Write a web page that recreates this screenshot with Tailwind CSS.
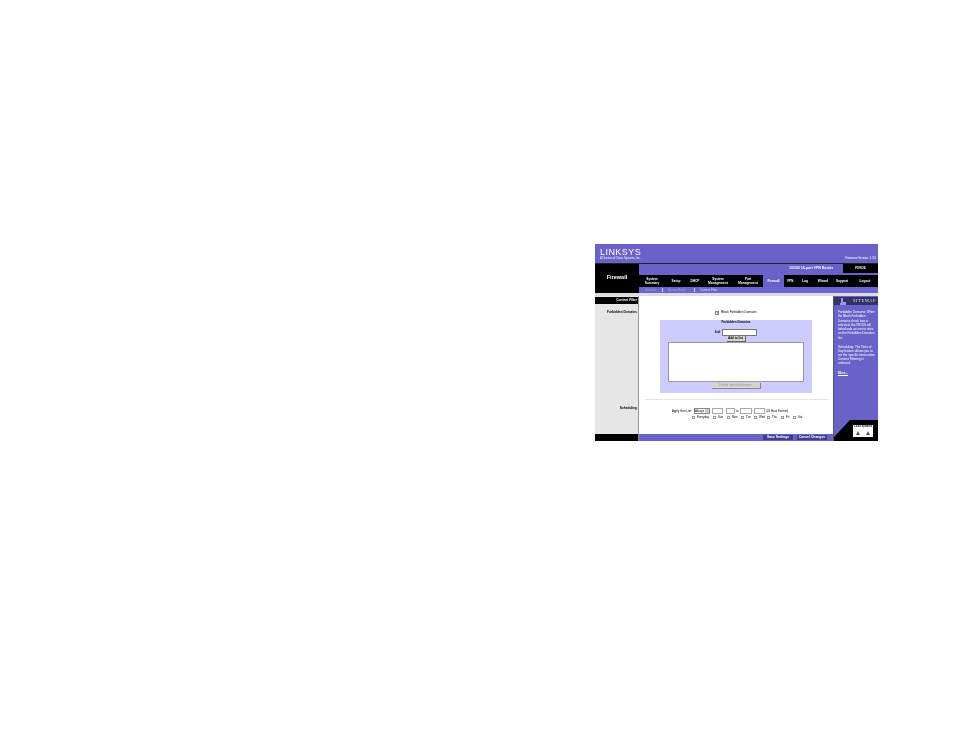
<!DOCTYPE html>
<html lang="en">
<head>
    <meta charset="UTF-8">
    <title>Firewall - Content Filter</title>
    <script src="https://cdn.jsdelivr.net/npm/@tailwindcss/browser@4"></script>
</head>
<body class="bg-white font-['Liberation_Sans',sans-serif] text-black">
    <div class="w-[954px] h-[738px] pt-[244px] pl-[595px]">
        <div class="w-[283px] h-[197px] flex flex-col blur-[0.45px]">

            <!-- top band -->
            <div class="h-[19px] bg-[#6a62c8] flex justify-between">
                <div class="pl-[5px] pt-[4px] text-white">
                    <div class="text-[9px] leading-[8px] tracking-[0.45px]">LINKSYS</div>
                    <div class="text-[2.8px] leading-[5px]">A Division of Cisco Systems, Inc.</div>
                </div>
                <div class="text-[2.9px] text-white pt-[12px] pr-[2px] leading-[4px]">Firmware Version: 1.3.6</div>
            </div>
            <div class="h-[1px] bg-[#222]"></div>

            <!-- header -->
            <div class="h-[29px] flex">
                <div class="w-[44px] bg-black text-white text-[5.5px] font-bold flex items-center justify-center pb-[3px]">Firewall</div>
                <div class="flex-1 flex flex-col">
                    <div class="h-[11px] flex items-start bg-[#6a62c8] text-white text-[3.5px] font-bold">
                        <div class="flex-1 h-[9px] flex items-center justify-end pr-[10px]">10/100 16-port VPN Router</div>
                        <div class="w-[35px] h-[9px] bg-black flex items-center justify-center">RV016</div>
                    </div>
                    <div class="h-[12px] flex bg-black text-white text-[3.2px] leading-[4px] font-bold text-center">
                        <div class="w-[26px] flex items-center justify-center">System<br>Summary</div>
                        <div class="w-[22px] flex items-center justify-center">Setup</div>
                        <div class="w-[16px] flex items-center justify-center">DHCP</div>
                        <div class="w-[30px] flex items-center justify-center">System<br>Management</div>
                        <div class="w-[30px] flex items-center justify-center">Port<br>Management</div>
                        <div class="w-[21px] bg-[#6a62c8] flex items-center justify-center">Firewall</div>
                        <div class="w-[12px] flex items-center justify-center">VPN</div>
                        <div class="w-[18px] flex items-center justify-center">Log</div>
                        <div class="w-[18px] flex items-center justify-center">Wizard</div>
                        <div class="w-[20px] flex items-center justify-center">Support</div>
                        <div class="flex-1 flex items-center justify-center">Logout</div>
                    </div>
                    <div class="h-[6px] bg-[#6a66d0] flex items-center text-[#a9a9ee] text-[2.9px] pl-[6px]">
                        <span class="w-[17px]">General</span>
                        <span class="w-[1px] h-[4px] bg-[#ddddff] mr-[5px]"></span>
                        <span class="w-[26px]">Access Rules</span>
                        <span class="w-[1px] h-[4px] bg-[#ddddff] mr-[5px]"></span>
                        <span class="text-[#ddddff]">Content Filter</span>
                    </div>
                </div>
            </div>
            <div class="h-[3px] bg-[#dddddd]"></div>

            <!-- body -->
            <div class="flex-1 flex min-h-0">
                <div class="w-[43px] pt-[1px] bg-[#e6e6e6] flex flex-col text-[3.2px] font-bold text-right">
                    <div class="h-[7px] bg-black text-white flex items-center justify-end pr-[1px]">Content Filter</div>
                    <div class="pt-[6px] pr-[1px] leading-[4px]">Forbidden Domains</div>
                    <div class="pt-[92px] pr-[1px] leading-[4px]">Scheduling</div>
                    <div class="mt-auto h-[7px] bg-black"></div>
                </div>
                <div class="w-[1px] bg-[#999999]"></div>

                <div class="w-[194px] flex flex-col">
                    <div class="flex-1 flex flex-col items-center text-[3.1px]">
                        <div class="flex items-center gap-[2px] mt-[14px] h-[5px]">
                            <span class="w-[4px] h-[4px] border border-[#888] text-[3.5px] leading-[2px] text-center">✓</span>
                            <span>Block Forbidden Domains</span>
                        </div>
                        <div class="w-[152px] h-[73px] mt-[5px] bg-[#ccccff] flex flex-col items-center">
                            <div class="h-[5px] font-bold leading-[5px]">Forbidden Domains</div>
                            <div class="flex items-center gap-[1px] mt-[4px] h-[7px]">
                                <span>Add:</span>
                                <span class="w-[35px] h-[7px] bg-white border border-[#777]"></span>
                            </div>
                            <div class="w-[19px] h-[6px] bg-[#d6d3ce] border-b border-r border-[#666] text-center leading-[5px] font-bold">Add to list</div>
                            <div class="w-[136px] h-[40px] bg-white border border-[#999]"></div>
                            <div class="w-[49px] h-[6px] mt-[1px] bg-[#d6d3ce] border-b border-r border-[#888] text-center leading-[5px] text-[#999]">Delete selected domain</div>
                        </div>
                        <div class="w-[183px] h-[1px] mt-[6px] bg-[#e4e4e4]"></div>
                        <div class="self-start ml-[33px] flex items-center mt-[8px] h-[6px] text-[2.9px]">
                            <span class="w-[22px]">Apply their List:</span>
                            <span class="w-[16px] h-[6px] border border-[#888] leading-[4px] relative">Always<span class="absolute right-0 top-0 w-[4px] h-[4px] bg-[#ccc]"></span></span>
                            <span class="w-[11px] h-[6px] ml-[2px] border border-[#aaa]"></span>
                            <span class="w-[3px] text-center">:</span>
                            <span class="w-[9px] h-[6px] border border-[#aaa]"></span>
                            <span class="w-[5px] text-center">to</span>
                            <span class="w-[12px] h-[6px] border border-[#aaa]"></span>
                            <span class="w-[2px] text-center">:</span>
                            <span class="w-[11px] h-[6px] border border-[#aaa]"></span>
                            <span class="ml-[1px]">(24 Hour Format)</span>
                        </div>
                        <div class="self-start ml-[53px] flex items-center mt-[1px] h-[5px] text-[2.9px]">
                            <span class="w-[3px] h-[3px] border border-[#999]"></span><span class="ml-[2px] w-[16px]">Everyday</span>
                            <span class="w-[3px] h-[3px] border border-[#999]"></span><span class="ml-[2px] w-[9px]">Sun</span>
                            <span class="w-[3px] h-[3px] border border-[#999]"></span><span class="ml-[2px] w-[9px]">Mon</span>
                            <span class="w-[3px] h-[3px] border border-[#999]"></span><span class="ml-[2px] w-[8px]">Tue</span>
                            <span class="w-[3px] h-[3px] border border-[#999]"></span><span class="ml-[2px] w-[8px]">Wed</span>
                            <span class="w-[3px] h-[3px] border border-[#999]"></span><span class="ml-[2px] w-[9px]">Thu</span>
                            <span class="w-[3px] h-[3px] border border-[#999]"></span><span class="ml-[2px] w-[7px]">Fri</span>
                            <span class="w-[3px] h-[3px] border border-[#999]"></span><span class="ml-[2px]">Sat</span>
                        </div>
                    </div>
                    <div class="h-[7px] bg-[#6a62c8] flex items-center justify-end gap-[4px] pr-[6px] text-white text-[3.4px] font-bold">
                        <span class="w-[30px] h-[5px] bg-[#3f3f90] leading-[5px] text-center">Save Settings</span>
                        <span class="w-[30px] h-[5px] bg-[#3f3f90] leading-[5px] text-center">Cancel Changes</span>
                    </div>
                </div>

                <div class="w-[1px] bg-[#555]"></div>
                <div class="w-[44px] pt-[1px] bg-[#6a62c8] flex flex-col text-white text-[3.1px] leading-[4.3px]">
                    <div class="h-[8px] bg-[#333366] flex items-center">
                        <svg class="w-[6px] h-[7px] ml-[6px]" viewBox="0 0 6 7"><path d="M1 0h2v4h3v3H0V5h1z" fill="#9999ee"/></svg>
                        <span class="ml-[7px] text-[4.6px] tracking-[0.5px] text-[#ddddfa] font-['Liberation_Serif',serif]">SITEMAP</span>
                    </div>
                    <div class="pl-[4px] pt-[5px] whitespace-nowrap">Forbidden Domains: When<br>the Block Forbidden<br>Domains check box is<br>selected, the RV016 will<br>forbid web access to sites<br>on the Forbidden Domains<br>list.</div>
                    <div class="pl-[4px] pt-[5px] whitespace-nowrap leading-[4px]">Scheduling: The Time of<br>Day feature allows you to<br>set the specific times when<br>Content Filtering is<br>enforced.</div>
                    <div class="pl-[4px] pt-[6px] font-bold underline">More...</div>
                    <div class="mt-auto h-[21px] relative">
                        <svg class="absolute inset-0 w-full h-full" viewBox="0 0 44 21"><path d="M0 21V17L16 0H44V21Z" fill="#000"/></svg>
                        <div class="absolute left-[19px] top-[5px] w-[20px] h-[12px] bg-white flex flex-col items-center text-black text-[2.6px] leading-[4px]">
                            <span class="font-bold">Cisco Systems</span>
                            <svg class="w-[16px] h-[6px]" viewBox="0 0 16 6"><path d="M1 6l2-4 2 4zM11 6l2-4 2 4z" fill="#555"/></svg>
                        </div>
                    </div>
                </div>
            </div>
        </div>
    </div>
</body>
</html>
